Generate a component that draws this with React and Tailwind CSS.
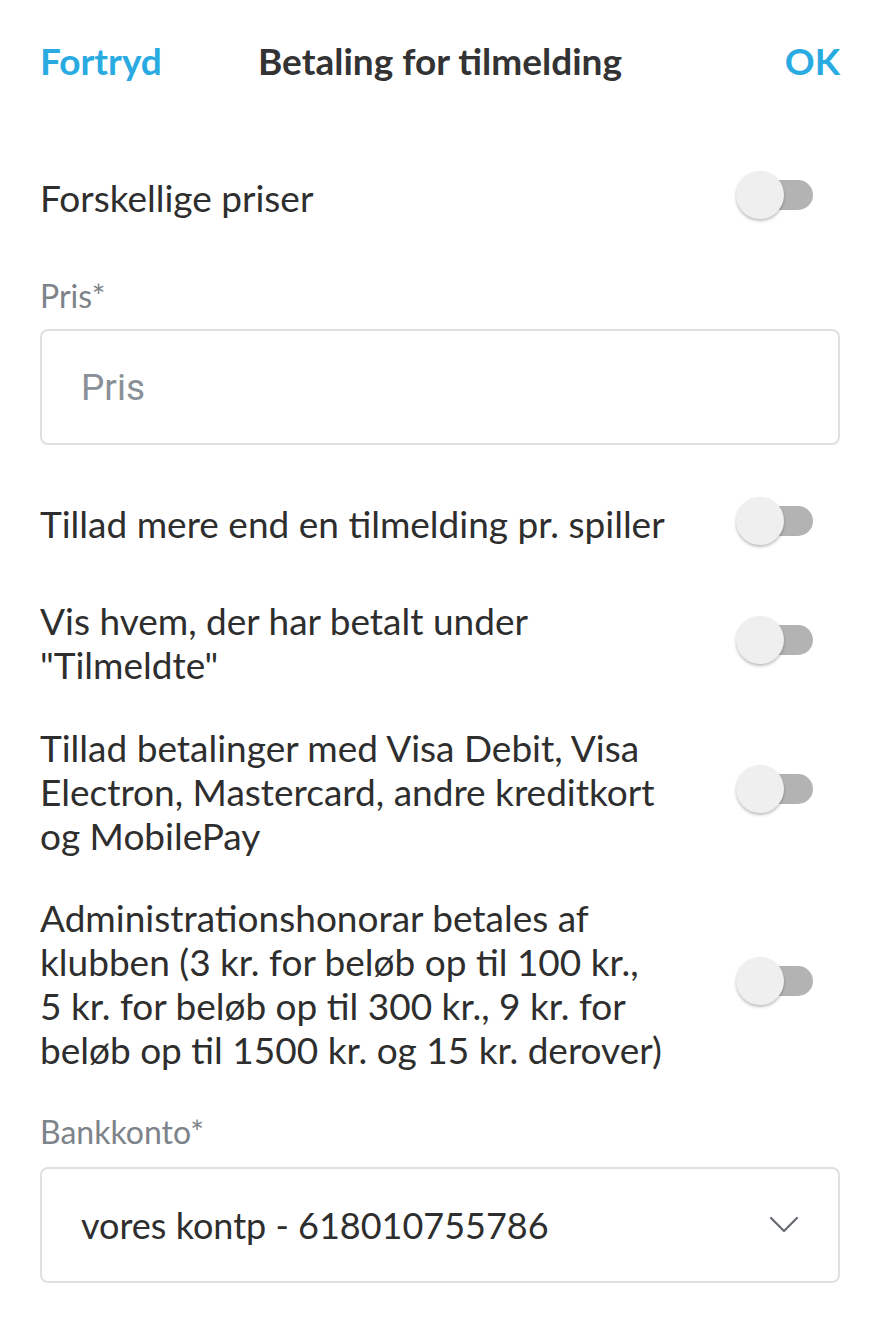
import React, { useState } from 'react';

const Toggle = ({ on, onChange }) => (
  <button
    type="button"
    onClick={() => onChange(!on)}
    className="relative w-[80px] h-[44px] shrink-0"
  >
    <span
      className={`absolute left-[9px] top-[7px] w-[68px] h-[30px] rounded-full ${on ? 'bg-[#8fd3f0]' : 'bg-[#b3b3b3]'}`}
    />
    <span
      className={`absolute top-[-2px] w-[48px] h-[48px] rounded-full shadow-[0_2px_3px_rgba(0,0,0,0.25)] ${on ? 'left-[30px] bg-[#29abe2]' : 'left-0 bg-[#efefef]'}`}
    />
  </button>
);

const ToggleRow = ({ label, on, onChange, className = '' }) => (
  <div className={`flex items-center justify-between ${className}`}>
    <p className="w-[640px] text-[37px] leading-[44px] text-[#2e2e2e]">{label}</p>
    <div className="mr-[24px]">
      <Toggle on={on} onChange={onChange} />
    </div>
  </div>
);

export default function App() {
  const [flags, setFlags] = useState({
    priser: false,
    flere: false,
    visBetalt: false,
    kort: false,
    honorar: false,
  });
  const [pris, setPris] = useState('');

  const set = (key) => (v) => setFlags((f) => ({ ...f, [key]: v }));

  return (
    <div className="min-h-screen bg-white px-10 font-['Lato','Open_Sans',sans-serif]">
      <div className="flex items-center h-[122px]">
        <button className="flex-1 text-left text-[37px] font-bold text-[#29abe2]">Fortryd</button>
        <h1 className="text-[37px] font-bold text-[#333333]">Betaling for tilmelding</h1>
        <button className="flex-1 text-right text-[37px] font-bold text-[#29abe2]">OK</button>
      </div>

      <ToggleRow className="mt-[51px]" label="Forskellige priser" on={flags.priser} onChange={set('priser')} />

      <label className="block mt-[55px] text-[32px] leading-[36px] text-[#7d8389]">Pris*</label>
      <input
        value={pris}
        onChange={(e) => setPris(e.target.value)}
        placeholder="Pris"
        className="mt-[15px] w-full h-[116px] rounded-lg border-2 border-[#e0e0e0] px-[39px] text-[37px] text-[#2e2e2e] placeholder:text-[#8a9097] font-['Roboto',sans-serif] outline-none"
      />

      <ToggleRow className="mt-[54px]" label="Tillad mere end en tilmelding pr. spiller" on={flags.flere} onChange={set('flere')} />
      <ToggleRow className="mt-[50px]" label={'Vis hvem, der har betalt under "Tilmeldte"'} on={flags.visBetalt} onChange={set('visBetalt')} />
      <ToggleRow
        className="mt-[39px]"
        label="Tillad betalinger med Visa Debit, Visa Electron, Mastercard, andre kreditkort og MobilePay"
        on={flags.kort}
        onChange={set('kort')}
      />
      <ToggleRow
        className="mt-[38px]"
        label={'Administrationshonorar betales af klubben (3 kr. for beløb op til 100 kr., 5\u00a0kr. for beløb op til 300 kr., 9 kr. for beløb op til 1500 kr. og 15 kr. derover)'}
        on={flags.honorar}
        onChange={set('honorar')}
      />

      <label className="block mt-[42px] text-[32px] leading-[36px] text-[#7d8389]">Bankkonto*</label>
      <button className="mt-[17px] w-full h-[116px] rounded-lg border-2 border-[#e0e0e0] pl-[39px] pr-[40px] flex items-center justify-between">
        <span className="text-[36px] text-[#2e2e2e]">vores kontp - 618010755786</span>
        <svg width="30" height="18" viewBox="0 0 30 18" fill="none" className="-mr-[1px]">
          <path d="M2 2 L15 15 L28 2" stroke="#666a6e" strokeWidth="2.2" strokeLinecap="round" strokeLinejoin="round" />
        </svg>
      </button>
    </div>
  );
}
